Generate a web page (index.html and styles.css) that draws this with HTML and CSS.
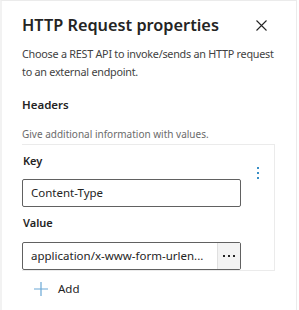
FILE: index.html
```html
<!DOCTYPE html>
<html>
<head>
<meta charset="utf-8">
<title>HTTP Request properties</title>
<link rel="stylesheet" href="styles.css">
</head>
<body>
<div id="panel">
    <div class="panel_header">
        <h1>HTTP Request properties</h1>
        <button class="close" aria-label="Close">
            <svg width="11" height="11" viewBox="0 0 11 11"><path d="M0.5 0.5 L10.5 10.5 M10.5 0.5 L0.5 10.5" stroke="#242424" stroke-width="1.1" fill="none"/></svg>
        </button>
    </div>
    <p class="intro">Choose a REST API to invoke/sends an HTTP request to an external endpoint.</p>

    <div class="section_title">Headers</div>
    <div class="hint">Give additional information with values.</div>

    <div class="header_card">
        <div class="fields">
            <label class="field_label">Key</label>
            <div class="input">Content-Type</div>
            <label class="field_label">Value</label>
            <div class="input with_button">
                <span class="input_text">application/x-www-form-urlen...</span>
                <span class="dots_btn">
                    <svg width="12" height="2" viewBox="0 0 12 2"><rect x="0" y="0" width="2" height="2" fill="#242424"/><rect x="5" y="0" width="2" height="2" fill="#242424"/><rect x="10" y="0" width="2" height="2" fill="#242424"/></svg>
                </span>
            </div>
        </div>
        <div class="more">
            <svg width="2" height="12" viewBox="0 0 2 12"><rect x="0" y="0" width="2" height="2" fill="#3a8fc6"/><rect x="0" y="5" width="2" height="2" fill="#3a8fc6"/><rect x="0" y="10" width="2" height="2" fill="#3a8fc6"/></svg>
        </div>
    </div>

    <div class="add">
        <svg width="14" height="14" viewBox="0 0 14 14"><path d="M7 0 V14 M0 7 H14" stroke="#6aa8d6" stroke-width="1.2" fill="none"/></svg>
        <span>Add</span>
    </div>
</div>
</body>
</html>
```

FILE: styles.css
```css
body {
    margin: 0;
    background: #fff;
    font-family: "Noto Sans", "Open Sans", sans-serif;
    color: #242424;
}
#panel {
    width: 297px;
    height: 310px;
    border-top: 1px solid #ebebeb;
    border-left: 2px solid #f2f2f2;
    border-right: 1px solid #ebebeb;
    padding: 11px 0 0 20px;
    box-sizing: border-box;
}
.panel_header {
    display: flex;
    align-items: center;
    justify-content: space-between;
    width: 245px;
}
h1 {
    margin: 0;
    font-size: 16.3px;
    font-weight: 600;
    line-height: 26px;
    color: #242424;
}
.close {
    border: none;
    background: none;
    padding: 0;
    display: flex;
}
.intro {
    margin: 7px 0 0 0;
    width: 256px;
    font-size: 10.8px;
    letter-spacing: -0.25px;
    line-height: 18px;
    color: #424242;
}
.section_title {
    margin-top: 15px;
    font-size: 11.5px;
    font-weight: 600;
    line-height: 18px;
    color: #242424;
}
.hint {
    margin-top: 12px;
    font-size: 10px;
    line-height: 16px;
    color: #6b6b6b;
}
.header_card {
    display: flex;
    width: 253px;
    margin-top: 2px;
    border: 1px solid #ebebeb;
    border-left: none;
    box-sizing: border-box;
}
.fields {
    width: 219px;
}
.field_label {
    display: block;
    height: 34px;
    padding: 7px 0 0 1px;
    box-sizing: border-box;
    font-size: 11px;
    font-weight: 600;
    line-height: 18px;
}
.field_label + .input + .field_label {
    height: 35px;
}
.input {
    height: 28px;
    border: 1px solid #616161;
    border-radius: 2px;
    box-sizing: border-box;
    font-size: 11.5px;
    line-height: 26px;
    padding-left: 8px;
    color: #242424;
}
.with_button {
    display: flex;
    padding-right: 0;
}
.input_text {
    flex: 1;
    white-space: nowrap;
    overflow: hidden;
}
.dots_btn {
    width: 22px;
    border-left: 1px solid #e0e0e0;
    background: #f3f3f3;
    display: flex;
    align-items: center;
    justify-content: center;
}
.more {
    margin: 17px 0 0 16px;
}
.add {
    display: flex;
    align-items: center;
    gap: 10px;
    margin: 9px 0 0 12px;
    font-size: 11.5px;
    line-height: 18px;
    color: #242424;
}
```
